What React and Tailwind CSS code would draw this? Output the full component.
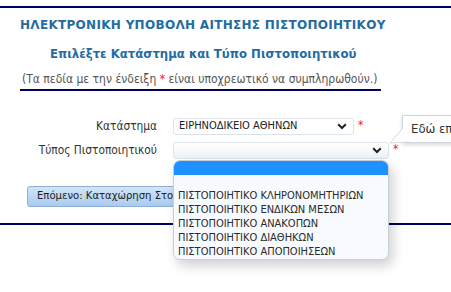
import React from 'react';

const options = [
  'ΠΙΣΤΟΠΟΙΗΤΙΚΟ ΚΛΗΡΟΝΟΜΗΤΗΡΙΩΝ',
  'ΠΙΣΤΟΠΟΙΗΤΙΚΟ ΕΝΔΙΚΩΝ ΜΕΣΩΝ',
  'ΠΙΣΤΟΠΟΙΗΤΙΚΟ ΑΝΑΚΟΠΩΝ',
  'ΠΙΣΤΟΠΟΙΗΤΙΚΟ ΔΙΑΘΗΚΩΝ',
  'ΠΙΣΤΟΠΟΙΗΤΙΚΟ ΑΠΟΠΟΙΗΣΕΩΝ',
];

const Chevron = () => (
  <svg width="10" height="7" viewBox="0 0 10 7" className="shrink-0">
    <path d="M1.2 1.2 L5 5 L8.8 1.2" fill="none" stroke="#222" strokeWidth="2" />
  </svg>
);

const Star = () => <span className="text-[#ff2020] text-[12px] leading-none ml-[4px] -mt-[4px]">*</span>;

const App = () => {
  return (
    <div
      className="relative w-[451px] h-[292px] overflow-hidden bg-white text-[#333]"
      style={{ fontFamily: '"DejaVu Sans Condensed", "DejaVu Sans", sans-serif' }}
    >
      <div className="pt-[6px]">
        <div className="border-t-2 border-[#000066]" />
      </div>

      {/* Header */}
      <h1
        className="mt-[9px] pl-[20px] text-[12px] font-bold tracking-[0.3px] text-[#236ba1] leading-[16px]"
        style={{ fontFamily: '"DejaVu Sans", sans-serif' }}
      >
        ΗΛΕΚΤΡΟΝΙΚΗ ΥΠΟΒΟΛΗ ΑΙΤΗΣΗΣ ΠΙΣΤΟΠΟΙΗΤΙΚΟΥ
      </h1>
      <h2 className="mt-[13px] pl-[50px] text-[13px] font-bold text-[#236ba1] leading-[16px]">
        Επιλέξτε Κατάστημα και Τύπο Πιστοποιητικού
      </h2>
      <div className="mt-[10px] ml-[20px] inline-block border-b-2 border-[#000066] pl-[2px] pr-[4px] pb-[3px] text-[12px] text-[#555] leading-[14px]">
        (Τα πεδία με την ένδειξη <span className="text-[#ff2020]">*</span> είναι υποχρεωτικό να συμπληρωθούν.)
      </div>

      {/* Form */}
      <div className="mt-[27px] grid grid-cols-[157px_auto] gap-x-[16px] gap-y-[7px] items-center text-[11px]">
        <div className="text-right text-[11.8px] leading-[17px] text-[#333]">Κατάστημα</div>
        <div className="flex items-center">
          <div className="w-[181px] h-[17px] flex items-center justify-between pl-[5px] pr-[6px] border border-[#dde3ea] rounded-[3px] bg-white text-[#222]">
            <span>ΕΙΡΗΝΟΔΙΚΕΙΟ ΑΘΗΝΩΝ</span>
            <Chevron />
          </div>
          <Star />
        </div>
        <div className="text-right text-[11.8px] leading-[17px] text-[#333]">Τύπος Πιστοποιητικού</div>
        <div className="flex items-center">
          <div className="w-[216px] h-[17px] flex items-center justify-end pr-[6px] border border-[#dde3ea] rounded-[3px] bg-gradient-to-b from-white to-[#eef2f6]">
            <Chevron />
          </div>
          <Star />
        </div>
      </div>

      <div className="mt-[23px] pl-[27px]">
        <button className="h-[21px] px-[9px] border border-[#8fb0d4] rounded-[3px] bg-gradient-to-b from-[#d3e5f8] to-[#a9cbef] text-[11.2px] text-[#222] whitespace-nowrap">
          Επόμενο: Καταχώρηση Στοιχείων
        </button>
      </div>

      <div className="mt-[16px] border-t-2 border-[#000066]" />

      {/* Tooltip */}
      <div className="absolute left-[402px] top-[115px] w-[80px] h-[28px] border border-[#cfd6de] bg-white shadow-[0_2px_4px_rgba(0,0,0,0.15)] text-[13px] text-[#333] pl-[8px] pt-[5px] leading-[16px] whitespace-nowrap">
        Εδώ επιλέγετε
      </div>
      <svg className="absolute left-[388px] top-[128px]" width="22" height="16" viewBox="0 0 22 16">
        <path d="M14.5 0.5 L2 15 L21.5 14" fill="#fff" stroke="#cfd6de" strokeWidth="1" />
      </svg>

      {/* Dropdown */}
      <div className="absolute left-[173px] top-[160px] w-[216px] h-[100px] rounded-[7px] overflow-hidden border border-[#c9ced6] bg-[#f7fbff] shadow-[4px_6px_12px_rgba(0,0,0,0.18)] text-[11px] text-[#2a2a2a]">
        <div className="h-[14px] bg-[#1e90ff]" />
        <div className="h-[14px]" />
        {options.map(o => (
          <div key={o} className="h-[14px] leading-[14px] pl-[4px] whitespace-nowrap">{o}</div>
        ))}
      </div>
    </div>
  );
};

export default App;
